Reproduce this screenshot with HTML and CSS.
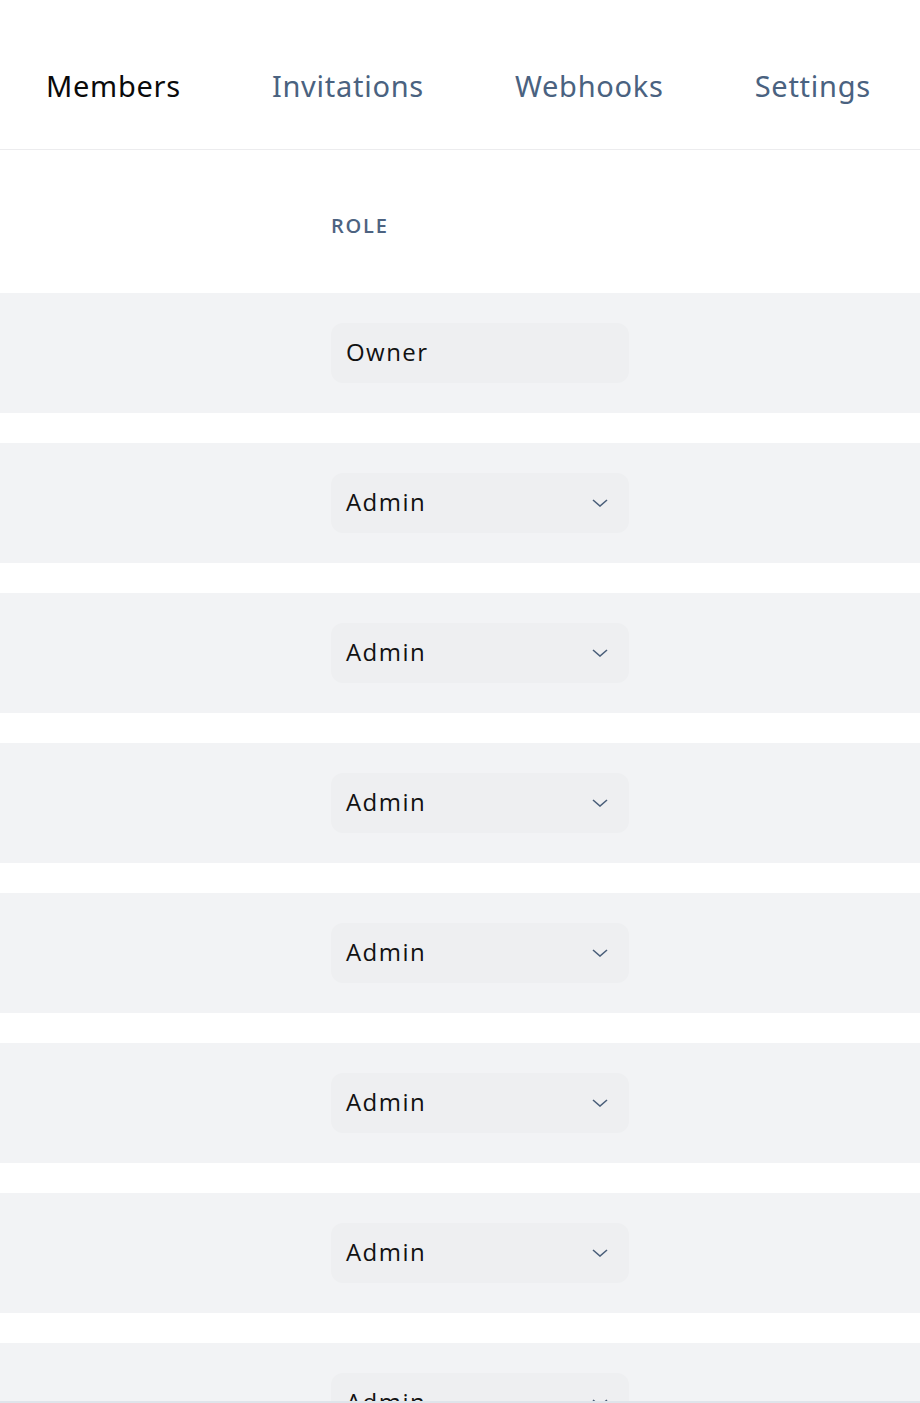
FILE: index.html
```html
<!DOCTYPE html>
<html lang="en">
<head>
<meta charset="utf-8">
<title>Members</title>
<link rel="stylesheet" href="styles.css">
</head>
<body>
<nav class="tabs">
  <a class="tab tab-active">Members</a>
  <a class="tab">Invitations</a>
  <a class="tab">Webhooks</a>
  <a class="tab">Settings</a>
</nav>
<main class="table">
  <div class="head"><span class="head-label">ROLE</span></div>
  <div class="row"><div class="select"><span>Owner</span></div></div>
  <div class="row"><div class="select"><span>Admin</span><svg class="chev" viewBox="0 0 16 8"><path d="M1 1l7 6 7-6"/></svg></div></div>
  <div class="row"><div class="select"><span>Admin</span><svg class="chev" viewBox="0 0 16 8"><path d="M1 1l7 6 7-6"/></svg></div></div>
  <div class="row"><div class="select"><span>Admin</span><svg class="chev" viewBox="0 0 16 8"><path d="M1 1l7 6 7-6"/></svg></div></div>
  <div class="row"><div class="select"><span>Admin</span><svg class="chev" viewBox="0 0 16 8"><path d="M1 1l7 6 7-6"/></svg></div></div>
  <div class="row"><div class="select"><span>Admin</span><svg class="chev" viewBox="0 0 16 8"><path d="M1 1l7 6 7-6"/></svg></div></div>
  <div class="row"><div class="select"><span>Admin</span><svg class="chev" viewBox="0 0 16 8"><path d="M1 1l7 6 7-6"/></svg></div></div>
  <div class="row"><div class="select"><span>Admin</span><svg class="chev" viewBox="0 0 16 8"><path d="M1 1l7 6 7-6"/></svg></div></div>
</main>
<div class="bottom-line"></div>
</body>
</html>
```
FILE: styles.css
```css
* { box-sizing: border-box; }
html, body { margin: 0; padding: 0; background: #fff; }
body { font-family: "Open Sans", "Noto Sans", sans-serif; overflow: hidden; height: 1403px; }

.tabs {
  display: flex;
  height: 150px;
  align-items: center;
  border-bottom: 1px solid #ececee;
  padding-top: 22px;
}
.tab {
  padding: 0 45px 0 46px;
  font-family: "Noto Sans", sans-serif;
  font-size: 29px;
  color: #4a6280;
  letter-spacing: 0.025em;
  line-height: 1;
}
.tab-active { color: #0a0a0a; }

.table {
  display: flex;
  flex-direction: column;
  gap: 30px;
}
.head {
  height: 113px;
  display: flex;
  align-items: center;
  padding-left: 331px;
  padding-top: 38px;
}
.head-label {
  font-size: 20px;
  font-weight: 600;
  color: #4d6381;
  letter-spacing: 0.09em;
}
.row {
  height: 120px;
  background: #f2f3f5;
  display: flex;
  align-items: center;
  padding-left: 331px;
}
.select {
  width: 298px;
  height: 60px;
  border-radius: 12px;
  background: #eeeff1;
  display: flex;
  align-items: center;
  justify-content: space-between;
  padding: 0 21px 0 15px;
  font-size: 24px;
  color: #111;
  letter-spacing: 0.06em;
}
.select span { margin-top: -3px; }
.chev {
  width: 16px;
  height: 8px;
  fill: none;
  stroke: #4a5f7a;
  stroke-width: 1.6;
}
.bottom-line {
  position: fixed;
  left: 0; right: 0; bottom: 0;
  height: 2px;
  background: #dfe4ea;
}
```
